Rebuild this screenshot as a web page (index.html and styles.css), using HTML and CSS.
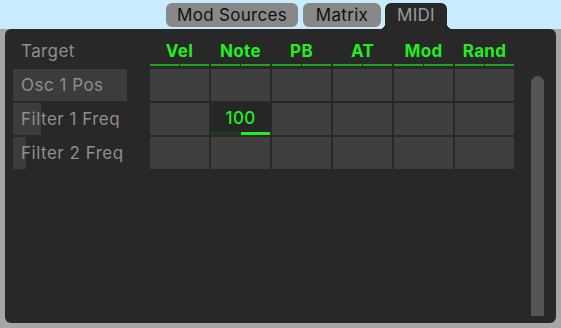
FILE: index.html
```html
<!DOCTYPE html>
<html lang="en">
<head>
    <meta charset="UTF-8">
    <meta name="viewport" content="width=device-width, initial-scale=1.0">
    <title>MIDI Matrix</title>
    <link rel="stylesheet" href="styles.css">
</head>
<body>
    <div class="tabs">
        <div class="tab tab-sources">Mod Sources</div>
        <div class="tab tab-matrix">Matrix</div>
        <div class="tab tab-midi active">MIDI</div>
    </div>

    <div class="frame">
        <div class="panel">
            <div class="matrix">
                <div class="head">
                    <div class="head-label">Target</div>
                    <div class="col-head">Vel</div>
                    <div class="col-head">Note</div>
                    <div class="col-head">PB</div>
                    <div class="col-head">AT</div>
                    <div class="col-head">Mod</div>
                    <div class="col-head">Rand</div>
                </div>

                <div class="rows">
                    <div class="row-label">
                        <div class="row-bar" style="width: 114px"></div>
                        <span>Osc 1 Pos</span>
                    </div>
                    <div class="cell"></div>
                    <div class="cell"></div>
                    <div class="cell"></div>
                    <div class="cell"></div>
                    <div class="cell"></div>
                    <div class="cell"></div>

                    <div class="row-label">
                        <div class="row-bar" style="width: 28px"></div>
                        <span>Filter 1 Freq</span>
                    </div>
                    <div class="cell"></div>
                    <div class="cell cell-active">
                        <span>100</span>
                        <div class="amount"><div class="amount-fill" style="width: 50%"></div></div>
                    </div>
                    <div class="cell"></div>
                    <div class="cell"></div>
                    <div class="cell"></div>
                    <div class="cell"></div>

                    <div class="row-label">
                        <div class="row-bar" style="width: 13px"></div>
                        <span>Filter 2 Freq</span>
                    </div>
                    <div class="cell"></div>
                    <div class="cell"></div>
                    <div class="cell"></div>
                    <div class="cell"></div>
                    <div class="cell"></div>
                    <div class="cell"></div>
                </div>
            </div>

            <div class="scrollbar"></div>
        </div>
    </div>
</body>
</html>
```

FILE: styles.css
```css
* {
    margin: 0;
    padding: 0;
    box-sizing: border-box;
}

body {
    font-family: Inter, 'DejaVu Sans', sans-serif;
    background: #c8ebfd;
    width: 561px;
    height: 328px;
    overflow: hidden;
}

.tabs {
    display: flex;
    align-items: flex-start;
    height: 29px;
    padding: 3px 0 0 166px;
}

.tab {
    display: flex;
    align-items: center;
    justify-content: center;
    height: 24px;
    background: #888888;
    color: #111111;
    font-size: 17px;
    border-radius: 6px;
    letter-spacing: 0.3px;
}

.tab-sources {
    width: 132px;
    margin-right: 5px;
}

.tab-matrix {
    width: 78px;
    margin-right: 4px;
}

.tab-midi {
    width: 62px;
}

.tab.active {
    position: relative;
    height: 26px;
    padding-bottom: 2px;
    background: #282828;
    color: #9a9a9a;
    border-radius: 6px 6px 0 0;
}

.tab.active::before,
.tab.active::after {
    content: '';
    position: absolute;
    bottom: 0;
    width: 6px;
    height: 6px;
}

.tab.active::before {
    left: -6px;
    background: radial-gradient(circle at 0 0, transparent 6px, #282828 6.5px);
}

.tab.active::after {
    right: -6px;
    background: radial-gradient(circle at 100% 0, transparent 6px, #282828 6.5px);
}

.frame {
    background: #a6a6a6;
    padding: 0 5px 5px 5px;
    height: 299px;
}

.panel {
    display: flex;
    height: 294px;
    background: #282828;
    border-radius: 6px;
    padding: 6px 12px 7px 8px;
}

.matrix {
    width: 501px;
}

.head,
.rows {
    display: grid;
    grid-template-columns: 135px repeat(6, 59px);
    column-gap: 2px;
}

.head {
    height: 31px;
    margin-bottom: 3px;
    align-items: center;
}

.head-label {
    padding-left: 8px;
    color: #8e8e8e;
    font-size: 17px;
    letter-spacing: 0.4px;
}

.col-head {
    height: 100%;
    display: flex;
    align-items: center;
    justify-content: center;
    padding-top: 1px;
    color: #22ee22;
    font-size: 17px;
    font-weight: 700;
    letter-spacing: 0.3px;
    background:
        linear-gradient(to right, #1ea41e 0, #1ea41e calc(50% - 0.5px), transparent calc(50% - 0.5px), transparent calc(50% + 0.5px), #1ea41e calc(50% + 0.5px)) bottom / 100% 2px no-repeat;
}

.rows {
    grid-auto-rows: 32px;
    row-gap: 2px;
}

.row-label {
    position: relative;
    display: flex;
    align-items: center;
    padding-left: 8px;
    color: #8e8e8e;
    font-size: 17px;
    letter-spacing: 0.5px;
    white-space: nowrap;
}

.row-bar {
    position: absolute;
    left: 0;
    top: 0;
    bottom: 0;
    background: #3c3c3c;
}

.row-label span {
    position: relative;
}

.cell {
    background: #3f3f3f;
}

.cell-active {
    display: flex;
    flex-direction: column;
    background: #262626;
    color: #22ee22;
    font-size: 17px;
    font-weight: 500;
    letter-spacing: 0.3px;
}

.cell-active span {
    flex: 1;
    display: flex;
    align-items: center;
    justify-content: center;
    padding-top: 1px;
}

.amount {
    display: flex;
    justify-content: flex-end;
    height: 3px;
    background: #1d3b1d;
}

.amount-fill {
    background: #22ee22;
}

.scrollbar {
    width: 13px;
    margin: 41px 0 0 17px;
    background: #555555;
    border-radius: 7px 7px 0 0;
}
```
